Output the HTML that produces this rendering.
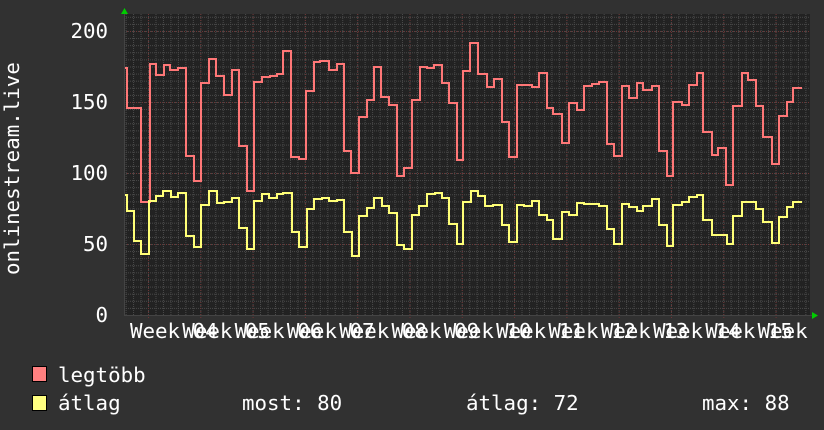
<!DOCTYPE html>
<html><head><meta charset="utf-8"><style>
html,body{margin:0;padding:0;background:#313131;}
svg{display:block}
text{font-family:"DejaVu Sans Mono","Liberation Mono",monospace;fill:#fff}
</style></head><body>
<svg width="824" height="430" viewBox="0 0 824 430" xmlns="http://www.w3.org/2000/svg">
<defs>
<pattern id="gh" x="0" y="315" width="824" height="7.1" patternUnits="userSpaceOnUse">
<line x1="0" y1="0.5" x2="824" y2="0.5" stroke="#4a4a4a" stroke-width="1" stroke-dasharray="1,1"/>
</pattern>
<pattern id="gv" x="148" y="0" width="7.47" height="430" patternUnits="userSpaceOnUse">
<line x1="0.5" y1="0" x2="0.5" y2="430" stroke="#4a4a4a" stroke-width="1" stroke-dasharray="1,1"/>
</pattern>
<clipPath id="lab"><rect x="0" y="315" width="811" height="30"/></clipPath>
</defs>
<rect x="0" y="0" width="824" height="430" fill="#313131"/>
<rect x="124" y="14" width="686" height="301" fill="#222"/>
<rect x="124" y="14" width="686" height="301" fill="url(#gh)"/>
<rect x="124" y="14" width="686" height="301" fill="url(#gv)"/>
<g stroke="#6e3434" stroke-width="1" stroke-dasharray="1,2">
<line x1="124" y1="244.5" x2="810" y2="244.5"/>
<line x1="124" y1="173.5" x2="810" y2="173.5"/>
<line x1="124" y1="102.5" x2="810" y2="102.5"/>
<line x1="124" y1="31.5" x2="810" y2="31.5"/>
<line x1="148.5" y1="14" x2="148.5" y2="318"/>
<line x1="200.8" y1="14" x2="200.8" y2="318"/>
<line x1="253.1" y1="14" x2="253.1" y2="318"/>
<line x1="305.4" y1="14" x2="305.4" y2="318"/>
<line x1="357.7" y1="14" x2="357.7" y2="318"/>
<line x1="410" y1="14" x2="410" y2="318"/>
<line x1="462.3" y1="14" x2="462.3" y2="318"/>
<line x1="514.6" y1="14" x2="514.6" y2="318"/>
<line x1="566.9" y1="14" x2="566.9" y2="318"/>
<line x1="619.2" y1="14" x2="619.2" y2="318"/>
<line x1="671.5" y1="14" x2="671.5" y2="318"/>
<line x1="723.8" y1="14" x2="723.8" y2="318"/>
<line x1="776.1" y1="14" x2="776.1" y2="318"/>
</g>
<line x1="124" y1="315.5" x2="812" y2="315.5" stroke="#444" stroke-width="1"/>
<line x1="124.5" y1="12" x2="124.5" y2="315" stroke="#444" stroke-width="1"/>
<polygon points="121,14 124.5,8 128,14" fill="#0c0"/>
<polygon points="812,312 818,315.5 812,319" fill="#0c0"/>

<path fill="none" stroke="#ff7777" stroke-width="2" d="M125,68 H127 V108 H141 V202 H150 V64 H156 V75 H164 V65 H170 V70 H178 V68 H186 V156 H194 V181 H201 V83 H209 V59 H216 V76 H224 V95 H232 V70 H239 V146 H247 V191 H254 V82 H262 V77 H270 V76 H277 V74 H283 V51 H291 V157 H299 V159 H306 V91 H314 V62 H320 V61 H329 V70 H337 V64 H344 V151 H351 V173 H359 V117 H367 V100 H374 V67 H381 V97 H389 V105 H397 V176 H404 V168 H412 V100 H420 V67 H427 V68 H434 V65 H442 V83 H449 V103 H457 V160 H463 V71 H470 V43 H478 V74 H487 V87 H494 V79 H502 V122 H509 V157 H517 V85 H532 V87 H539 V73 H547 V108 H553 V114 H562 V143 H569 V103 H577 V110 H584 V86 H592 V84 H599 V82 H607 V144 H614 V156 H622 V86 H629 V98 H637 V83 H643 V90 H652 V86 H659 V151 H667 V176 H673 V102 H682 V105 H689 V85 H697 V73 H703 V132 H712 V155 H718 V148 H726 V185 H733 V106 H742 V73 H748 V80 H756 V106 H763 V137 H772 V164 H779 V116 H787 V102 H793 V88 H802"/>

<path fill="none" stroke="#ffff77" stroke-width="2" d="M125,195 H127 V211 H134 V241 H141 V254 H149 V201 H156 V196 H163 V191 H171 V197 H178 V193 H186 V236 H194 V247 H201 V205 H209 V191 H217 V203 H224 V202 H232 V198 H239 V228 H247 V249 H254 V201 H262 V194 H269 V198 H277 V194 H283 V193 H292 V232 H299 V247 H307 V209 H314 V199 H322 V198 H329 V201 H337 V200 H344 V232 H352 V256 H359 V216 H367 V208 H374 V198 H382 V206 H389 V213 H397 V245 H404 V249 H412 V215 H419 V206 H427 V194 H435 V193 H442 V198 H449 V224 H457 V244 H463 V202 H471 V191 H478 V196 H485 V206 H493 V205 H502 V225 H509 V242 H517 V205 H524 V206 H532 V201 H539 V215 H547 V220 H553 V239 H562 V212 H569 V215 H577 V203 H584 V204 H599 V206 H607 V229 H614 V244 H622 V204 H629 V207 H637 V211 H643 V206 H652 V199 H659 V225 H667 V246 H673 V205 H682 V202 H689 V197 H697 V195 H703 V220 H712 V235 H727 V244 H733 V216 H742 V202 H748 V202 H756 V209 H763 V222 H772 V243 H779 V217 H787 V207 H793 V202 H802"/>

<g font-size="20.8" text-anchor="end">
<text x="108" y="38">200</text>
<text x="108" y="109">150</text>
<text x="108" y="180">100</text>
<text x="108" y="251">50</text>
<text x="108" y="322">0</text>
</g>
<text font-size="20.8" transform="translate(19,275) rotate(-90)">onlinestream.live</text>

<g font-size="20.8" clip-path="url(#lab)">
<text x="130" y="338">Week 04</text>
<text x="182.3" y="338">Week 05</text>
<text x="234.6" y="338">Week 06</text>
<text x="286.9" y="338">Week 07</text>
<text x="339.2" y="338">Week 08</text>
<text x="391.5" y="338">Week 09</text>
<text x="443.8" y="338">Week 10</text>
<text x="496.1" y="338">Week 11</text>
<text x="548.4" y="338">Week 12</text>
<text x="600.7" y="338">Week 13</text>
<text x="653" y="338">Week 14</text>
<text x="705.3" y="338">Week 15</text>
<text x="757.6" y="338">Week 16</text>
</g>

<rect x="32.5" y="366.5" width="14" height="15" fill="#ff8080" stroke="#000"/>
<rect x="32.5" y="395.5" width="14" height="15" fill="#ffff80" stroke="#000"/>
<g font-size="20.8">
<text x="58" y="382">legtöbb</text>
<text x="58" y="410">átlag</text>
<text x="242" y="410">most: 80</text>
<text x="466" y="410">átlag: 72</text>
<text x="702" y="410">max: 88</text>
</g>
</svg>
</body></html>
